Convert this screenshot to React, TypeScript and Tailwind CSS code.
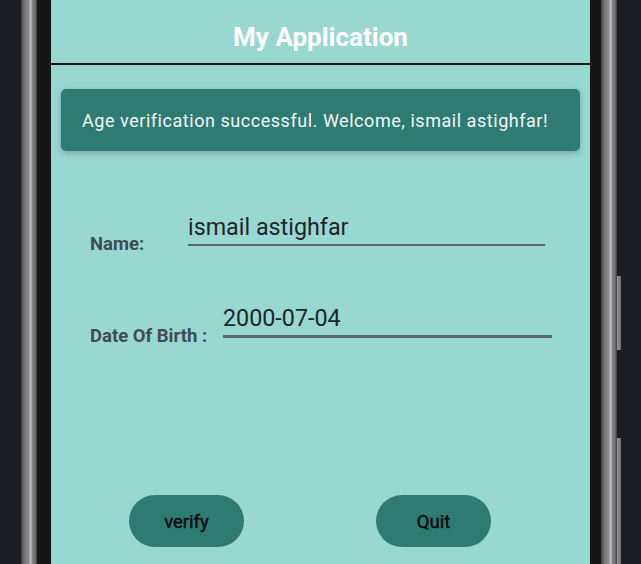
import React from "react";

const font = { fontFamily: "Roboto, 'Noto Sans', sans-serif" };

function Bezel() {
  return (
    <div className="w-[16px] shrink-0 bg-[linear-gradient(to_right,#3d3d40_0%,#6f6f72_18%,#8e8e90_50%,#c9c9cb_62%,#858587_70%,#6a6a6c_90%,#3a3a3c_100%)]" />
  );
}

function Field({
  label,
  value,
  labelW,
  inputW,
  lineH,
}: {
  label: string;
  value: string;
  labelW: string;
  inputW: string;
  lineH: string;
}) {
  return (
    <div className="flex items-end pl-[39px]">
      <span className={`${labelW} shrink-0 text-[18.5px] leading-[24px] font-bold text-[#3f4b50]`}>
        {label}
      </span>
      <div className={`${inputW} mb-[10px] flex flex-col`}>
        <span className="pb-[2px] text-[23.3px] leading-[30px] text-[#1c2628]">{value}</span>
        <div className={`${lineH} w-full bg-[#5b6870]`} />
      </div>
    </div>
  );
}

export default function App() {
  return (
    <div className="flex h-[564px] w-[641px] overflow-hidden bg-[#1b1c24]" style={font}>
      <div className="w-[21px] shrink-0" />
      <Bezel />
      <div className="w-[14px] shrink-0 bg-[#161616]" />

      <div className="flex w-[539px] shrink-0 flex-col bg-[#99d8d0]">
        <div className="flex h-[65px] shrink-0 items-center justify-center border-b-2 border-[#111] pt-[11px]">
          <h1 className="text-[26px] font-bold text-white">My Application</h1>
        </div>

        <div className="mx-[10px] mt-[24px] flex h-[62px] items-center rounded-[5px] bg-[#2e7b73] pl-[21px] shadow-[0_2px_6px_rgba(0,0,0,0.25)]">
          <p className="text-[18px] tracking-[0.03em] text-[#f2f7f6]">
            Age verification successful. Welcome, ismail astighfar!
          </p>
        </div>

        <div className="mt-[61px]">
          <Field label="Name:" value="ismail astighfar" labelW="w-[98px]" inputW="w-[357px]" lineH="h-[2px]" />
        </div>
        <div className="mt-[47px]">
          <Field label="Date Of Birth :" value="2000-07-04" labelW="w-[133px]" inputW="w-[329px]" lineH="h-[3px]" />
        </div>

        <div className="mt-[147px] flex gap-[132px] pl-[78px]">
          <button className="h-[52px] w-[115px] rounded-full bg-[#2e7b73] pt-[3px] text-[18.5px] font-normal text-[#050c0b] [-webkit-text-stroke:0.45px_#050c0b]">
            verify
          </button>
          <button className="h-[52px] w-[115px] rounded-full bg-[#2e7b73] pt-[3px] text-[18.5px] font-normal text-[#050c0b] [-webkit-text-stroke:0.45px_#050c0b]">
            Quit
          </button>
        </div>
      </div>

      <div className="w-[11px] shrink-0 bg-[#161616]" />
      <Bezel />
      <div className="flex flex-1 flex-col">
        <div className="mt-[276px] h-[74px] w-[4px] bg-[linear-gradient(to_right,#9a9a9c,#6c6c6e)]" />
        <div className="mt-[88px] w-[4px] flex-1 bg-[linear-gradient(to_right,#9a9a9c,#6c6c6e)]" />
      </div>
    </div>
  );
}
